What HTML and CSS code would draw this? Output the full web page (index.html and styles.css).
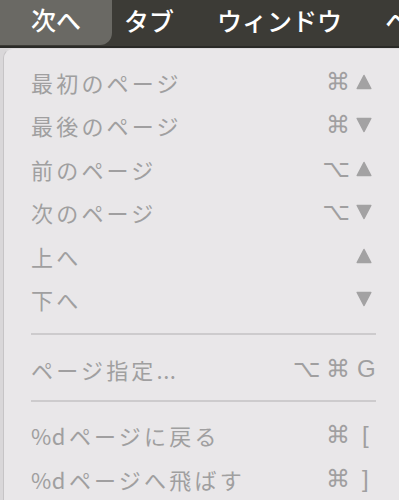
FILE: index.html
```html
<!DOCTYPE html>
<html lang="ja">
<head>
<meta charset="utf-8">
<link rel="stylesheet" href="styles.css">
</head>
<body>
<div class="menubar">
  <div class="mb-item active">次へ</div>
  <div class="mb-item">タブ</div>
  <div class="mb-item">ウィンドウ</div>
  <div class="mb-item">ヘ</div>
</div>
<div class="stage">
  <div class="menu">
    <div class="row"><span class="label">最初のページ</span><span class="mods">⌘</span><span class="key"><svg class="tri" viewBox="0 0 16 16"><path d="M8 1.5 L14.8 14.5 L1.2 14.5 Z"/></svg></span></div>
    <div class="row"><span class="label">最後のページ</span><span class="mods">⌘</span><span class="key"><svg class="tri" viewBox="0 0 16 16"><path d="M1.2 1.5 L14.8 1.5 L8 14.5 Z"/></svg></span></div>
    <div class="row"><span class="label">前のページ</span><span class="mods">⌥</span><span class="key"><svg class="tri" viewBox="0 0 16 16"><path d="M8 1.5 L14.8 14.5 L1.2 14.5 Z"/></svg></span></div>
    <div class="row"><span class="label">次のページ</span><span class="mods">⌥</span><span class="key"><svg class="tri" viewBox="0 0 16 16"><path d="M1.2 1.5 L14.8 1.5 L8 14.5 Z"/></svg></span></div>
    <div class="row"><span class="label">上へ</span><span class="mods"></span><span class="key"><svg class="tri" viewBox="0 0 16 16"><path d="M8 1.5 L14.8 14.5 L1.2 14.5 Z"/></svg></span></div>
    <div class="row"><span class="label">下へ</span><span class="mods"></span><span class="key"><svg class="tri" viewBox="0 0 16 16"><path d="M1.2 1.5 L14.8 1.5 L8 14.5 Z"/></svg></span></div>
    <div class="sep sep1"></div>
    <div class="row"><span class="label">ページ指定<span class="lat">...</span></span><span class="mods">⌥ ⌘</span><span class="key txt">G</span></div>
    <div class="sep sep2"></div>
    <div class="row"><span class="label"><span class="lat pct">%d</span>ページに戻る</span><span class="mods">⌘</span><span class="key txt br">[</span></div>
    <div class="row"><span class="label"><span class="lat pct">%d</span>ページへ飛ばす</span><span class="mods">⌘</span><span class="key txt br">]</span></div>
  </div>
</div>
</body>
</html>
```

FILE: styles.css
```css
html, body {
  margin: 0;
  padding: 0;
}
body {
  width: 399px;
  height: 500px;
  overflow: hidden;
  background: #d9d7d9;
  font-family: "Noto Sans CJK JP", "Noto Sans", sans-serif;
}
.menubar {
  height: 46px;
  background: #3c3b36;
  border-bottom: 2px solid #2a2a27;
  display: flex;
  align-items: stretch;
  color: #ffffff;
  font-size: 25px;
  font-weight: 500;
  white-space: nowrap;
  overflow: hidden;
}
.mb-item {
  display: flex;
  align-items: center;
  padding: 0 21.5px;
  line-height: 1;
  padding-bottom: 6px;
}
.mb-item.active {
  background: #6a6964;
  border-radius: 0 0 12px 0;
  padding-left: 31px;
  padding-right: 31px;
  margin-right: -9.5px;
  height: 39px;
}
.stage {
  padding-left: 3px;
}
.menu {
  background: #e9e7e9;
  border-left: 1px solid #c6c4c6;
  border-top: 1px solid #dcdadc;
  border-radius: 10px 0 0 0;
  height: 460px;
  padding: 11px 7px 0 27px;
  color: #a09fa0;
}
.row {
  height: 43.5px;
  display: flex;
  align-items: center;
  font-size: 22px;
  letter-spacing: 3.2px;
  white-space: nowrap;
}
.label {
  flex: 1;
}
.lat {
  letter-spacing: 0.5px;
}
.pct {
  margin-right: 3px;
}
.mods {
  font-family: "DejaVu Sans", sans-serif;
  font-size: 24px;
  letter-spacing: 0;
  text-align: right;
  word-spacing: -2px;
}
.key {
  width: 42px;
  display: flex;
  align-items: center;
  padding-left: 6px;
  box-sizing: border-box;
}
.key.txt {
  font-family: "Liberation Sans", sans-serif;
  font-size: 24px;
  letter-spacing: 0;
  padding-left: 7px;
}
.key.br {
  padding-left: 12px;
}
.tri {
  width: 16px;
  height: 16px;
  fill: #a3a2a3;
  stroke: #a3a2a3;
  stroke-width: 1.5;
  stroke-linejoin: round;
}
.sep {
  height: 2px;
  background: #cdcbcd;
  margin-right: 16px;
}
.sep1 {
  margin-top: 12px;
  margin-bottom: 12px;
}
.sep2 {
  margin-top: 9px;
  margin-bottom: 12px;
}
```
